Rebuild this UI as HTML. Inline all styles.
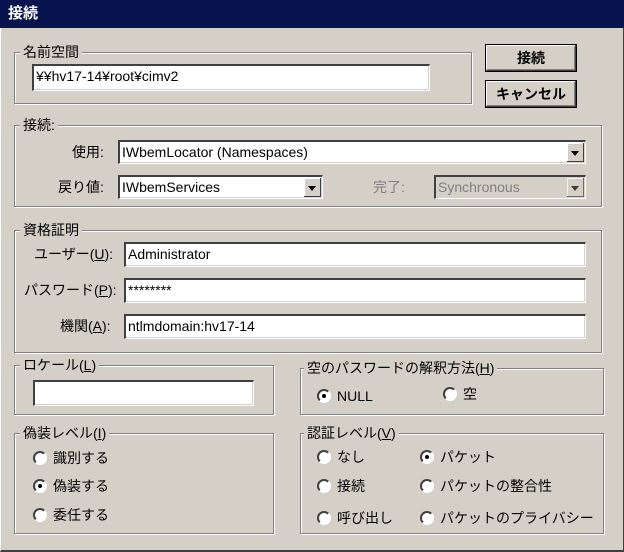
<html><head><style>
body{margin:0;width:624px;height:552px;background:#d4d0c8;font-family:"Liberation Sans","Noto Sans CJK JP",sans-serif;font-size:14px;color:#000;position:relative;overflow:hidden}
.a{position:absolute}
.title{left:0;top:0;width:624px;height:28px;background:#08144e;color:#fff;font-weight:bold;font-size:15px;line-height:28px;text-indent:8px}
.frame{left:0;top:28px;width:622px;height:522px;border-right:1px solid #404040;border-bottom:2px solid #404040;border-left:1px solid #fff}
.g{position:absolute;border:1px solid #808080;box-shadow:1px 1px 0 #fff,inset 1px 1px 0 #fff}
.gl{position:absolute;background:#d4d0c8;padding:0 3px;line-height:16px;white-space:nowrap}
.e{position:absolute;background:#fff;border-top:2px solid #404040;border-left:2px solid #404040;border-right:1px solid #fff;border-bottom:1px solid #fff;box-shadow:inset -1px -1px 0 #d4d0c8;box-sizing:border-box;line-height:20px;padding-left:2px;white-space:nowrap;overflow:hidden}
.dd{position:absolute;right:1px;top:1px;bottom:1px;width:17px;background:#d4d0c8;border-right:1px solid #404040;border-bottom:1px solid #404040;box-shadow:inset 1px 1px 0 #fff;box-sizing:border-box}
.dd:after{content:"";position:absolute;left:4px;top:8px;border-left:4px solid transparent;border-right:4px solid transparent;border-top:5px solid #000}
.btn{position:absolute;background:#d4d0c8;border:1px solid #000;box-shadow:inset -1px -1px 0 #404040,inset 1px 1px 0 #fff,inset -2px -2px 0 #808080;box-sizing:border-box;text-align:center;font-weight:bold;line-height:26px}
.lb{position:absolute;white-space:nowrap;line-height:20px}
.r{position:absolute;white-space:nowrap;line-height:16px;padding-left:20px}
.r:before{content:"";position:absolute;left:0;top:1px;width:10px;height:10px;border-radius:50%;background:#fff;border:2px solid;border-color:#404040 #fff #fff #404040}
.r.on:after{content:"";position:absolute;left:5px;top:6px;width:4px;height:4px;border-radius:50%;background:#000}
u{text-decoration:underline}
</style></head><body>
<div class="a title">接続</div>
<div class="a frame"></div>

<div class="g" style="left:14px;top:52px;width:456px;height:50px"></div>
<div class="gl" style="left:20px;top:44px">名前空間</div>
<div class="e" style="left:32px;top:64px;width:398px;height:27px">¥¥hv17-14¥root¥cimv2</div>
<div class="btn" style="left:485px;top:44px;width:92px;height:28px">接続</div>
<div class="btn" style="left:485px;top:80px;width:92px;height:28px">キャンセル</div>

<div class="g" style="left:14px;top:125px;width:586px;height:80px"></div>
<div class="gl" style="left:20px;top:117px">接続:</div>
<div class="lb" style="left:72px;top:142px">使用:</div>
<div class="e" style="left:118px;top:140px;width:468px;height:24px">IWbemLocator (Namespaces)<div class="dd"></div></div>
<div class="lb" style="left:58px;top:177px">戻り値:</div>
<div class="e" style="left:118px;top:175px;width:205px;height:24px">IWbemServices<div class="dd"></div></div>
<div class="lb" style="left:373px;top:177px;color:#808080">完了:</div>
<div class="e" style="left:434px;top:175px;width:152px;height:24px;background:#d4d0c8;color:#808080">Synchronous<div class="dd" style="opacity:.7"></div></div>

<div class="g" style="left:14px;top:230px;width:586px;height:121px"></div>
<div class="gl" style="left:20px;top:222px">資格証明</div>
<div class="lb" style="left:34px;top:244px">ユーザー(<u>U</u>):</div>
<div class="e" style="left:124px;top:242px;width:462px;height:25px">Administrator</div>
<div class="lb" style="left:24px;top:280px">パスワード(<u>P</u>):</div>
<div class="e" style="left:124px;top:278px;width:462px;height:25px">********</div>
<div class="lb" style="left:60px;top:316px">機関(<u>A</u>):</div>
<div class="e" style="left:124px;top:314px;width:462px;height:25px">ntlmdomain:hv17-14</div>

<div class="g" style="left:14px;top:365px;width:258px;height:48px"></div>
<div class="gl" style="left:20px;top:357px">ロケール(<u>L</u>)</div>
<div class="e" style="left:33px;top:380px;width:221px;height:26px"></div>

<div class="g" style="left:300px;top:368px;width:302px;height:45px"></div>
<div class="gl" style="left:304px;top:360px">空のパスワードの解釈方法(<u>H</u>)</div>
<div class="r on" style="left:317px;top:388px">NULL</div>
<div class="r" style="left:443px;top:386px">空</div>

<div class="g" style="left:14px;top:433px;width:258px;height:99px"></div>
<div class="gl" style="left:20px;top:425px">偽装レベル(<u>I</u>)</div>
<div class="r" style="left:33px;top:450px">識別する</div>
<div class="r on" style="left:33px;top:478px">偽装する</div>
<div class="r" style="left:33px;top:507px">委任する</div>

<div class="g" style="left:300px;top:433px;width:302px;height:99px"></div>
<div class="gl" style="left:304px;top:425px">認証レベル(<u>V</u>)</div>
<div class="r" style="left:317px;top:449px">なし</div>
<div class="r on" style="left:420px;top:449px">パケット</div>
<div class="r" style="left:317px;top:478px">接続</div>
<div class="r" style="left:420px;top:478px">パケットの整合性</div>
<div class="r" style="left:317px;top:510px">呼び出し</div>
<div class="r" style="left:420px;top:510px">パケットのプライバシー</div>
</body></html>
